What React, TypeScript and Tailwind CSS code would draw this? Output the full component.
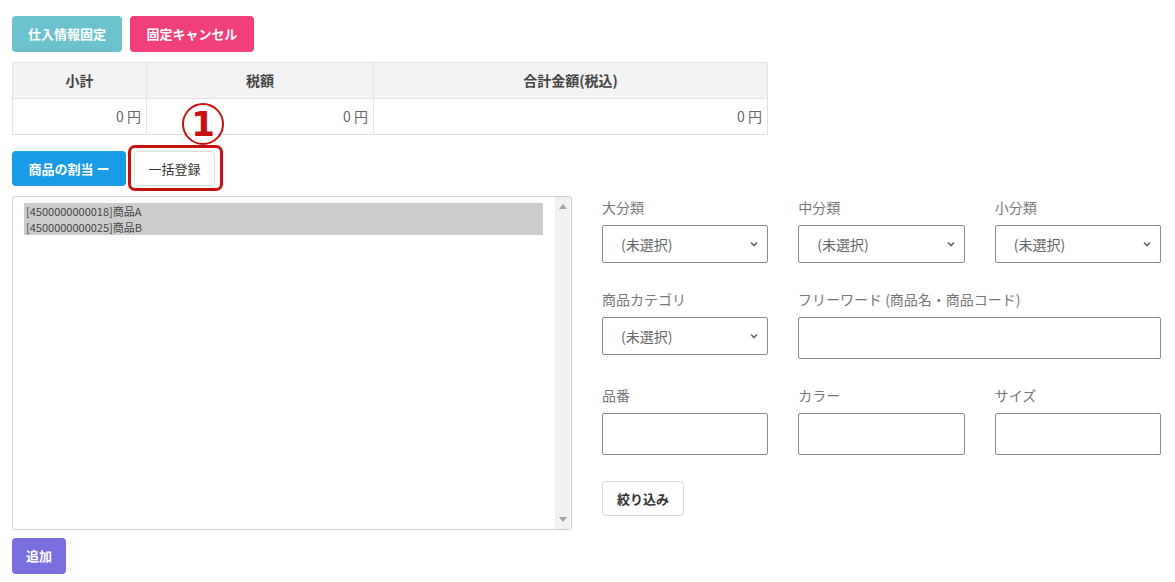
import React from "react";

const font = { fontFamily: '"Noto Sans CJK JP", "Noto Sans", sans-serif' };

function Chevron() {
  return (
    <svg width="10" height="10" viewBox="0 0 10 10" className="absolute right-[8px] top-1/2 -translate-y-1/2">
      <path d="M2 3.5 L5 6.5 L8 3.5" fill="none" stroke="#666" strokeWidth="1.6" />
    </svg>
  );
}

function Select() {
  return (
    <div className="relative h-[38px] w-full border border-[#8a8a8a] rounded-[2px] bg-white flex items-center pl-[18px] text-[14px] text-[#666]">
      (未選択)
      <Chevron />
    </div>
  );
}

function Field({ label, children }: { label: string; children: React.ReactNode }) {
  return (
    <div className="flex flex-col">
      <div className="text-[14px] text-[#777] leading-[20px] h-[20px] mb-[8px]">{label}</div>
      {children}
    </div>
  );
}

function Input() {
  return <div className="h-[42px] w-full border border-[#8a8a8a] rounded-[2px] bg-white" />;
}

export default function App() {
  return (
    <div style={font} className="w-[1175px] h-[582px] bg-white pl-[12px] pt-[16px] relative overflow-hidden">
      <div className="flex gap-[8px]">
        <div className="h-[36px] w-[110px] rounded-[4px] bg-[#6cc3cf] text-white text-[13px] font-bold flex items-center justify-center">仕入情報固定</div>
        <div className="h-[36px] w-[124px] rounded-[4px] bg-[#f03f7b] text-white text-[13px] font-bold flex items-center justify-center">固定キャンセル</div>
      </div>

      <div className="mt-[10px] w-[756px] border border-[#e3e3e3] text-[14px]">
        <div className="flex h-[36px] bg-[#f3f3f3] font-bold text-[#444] border-b border-[#e3e3e3]">
          <div className="w-[134px] border-r border-[#e3e3e3] flex items-center justify-center">小計</div>
          <div className="w-[227px] border-r border-[#e3e3e3] flex items-center justify-center">税額</div>
          <div className="flex-1 flex items-center justify-center">合計金額(税込)</div>
        </div>
        <div className="flex h-[35px] text-[#666]">
          <div className="w-[134px] border-r border-[#e3e3e3] flex items-center justify-end pr-[5px]">0 円</div>
          <div className="w-[227px] border-r border-[#e3e3e3] flex items-center justify-end pr-[5px]">0 円</div>
          <div className="flex-1 flex items-center justify-end pr-[5px]">0 円</div>
        </div>
      </div>

      <div className="mt-[16px] flex gap-[8px] items-center">
        <div className="h-[35px] w-[114px] rounded-[4px] bg-[#1a9be6] text-white text-[13px] font-bold flex items-center justify-center">商品の割当 ー</div>
        <div className="relative">
          <div className="h-[35px] w-[81px] rounded-[4px] border border-[#dcdcdc] bg-white text-[#333] text-[13px] flex items-center justify-center">一括登録</div>
          <div className="absolute left-[-6px] top-[-6px] w-[95px] h-[46px] border-[3px] border-[#c81010] rounded-[7px]" />
          <div
            className="absolute left-[48px] top-[-48px] w-[42px] h-[42px] rounded-full border-[2.5px] border-[#c81010] flex items-center justify-center text-[34px] font-bold text-[#c81010] leading-none"
            style={{ fontFamily: '"DejaVu Sans", sans-serif' }}
          >
            1
          </div>
        </div>
      </div>

      <div className="mt-[10px] flex gap-[30px]">
        <div className="w-[560px] h-[334px] border border-[#cfcfcf] rounded-[3px] flex bg-white">
          <div className="flex-1 pt-[6px] pl-[11px] pr-[12px]">
            <div className="bg-[#cccccc] text-[11px] leading-[16px] text-[#444] pl-[2px]">
              <div>[4500000000018]商品A</div>
              <div>[4500000000025]商品B</div>
            </div>
          </div>
          <div className="w-[15px] mr-[1px] bg-[#f1f1f1] flex flex-col items-center justify-between py-[7px]">
            <svg width="8" height="5" viewBox="0 0 8 5"><path d="M0 5 L4 0 L8 5 Z" fill="#a3a3a3" /></svg>
            <svg width="8" height="5" viewBox="0 0 8 5"><path d="M0 0 L4 5 L8 0 Z" fill="#a3a3a3" /></svg>
          </div>
        </div>

        <div className="w-[559px] flex flex-col">
          <div className="grid grid-cols-3 gap-x-[30px] pt-[1px]">
            <Field label="大分類"><Select /></Field>
            <Field label="中分類"><Select /></Field>
            <Field label="小分類"><Select /></Field>
          </div>
          <div className="flex gap-x-[30px] mt-[26px]">
            <div className="w-[166px] shrink-0"><Field label="商品カテゴリ"><Select /></Field></div>
            <div className="flex-1"><Field label="フリーワード (商品名・商品コード)"><Input /></Field></div>
          </div>
          <div className="grid grid-cols-3 gap-x-[30px] mt-[26px]">
            <Field label="品番"><Input /></Field>
            <Field label="カラー"><Input /></Field>
            <Field label="サイズ"><Input /></Field>
          </div>
          <div className="mt-[26px]">
            <div className="h-[35px] w-[82px] rounded-[4px] border border-[#dcdcdc] bg-white text-[#333] text-[13px] font-bold flex items-center justify-center">絞り込み</div>
          </div>
        </div>
      </div>

      <div className="mt-[8px]">
        <div className="h-[36px] w-[54px] rounded-[4px] bg-[#7a6fe0] text-white text-[13px] font-bold flex items-center justify-center">追加</div>
      </div>
    </div>
  );
}
